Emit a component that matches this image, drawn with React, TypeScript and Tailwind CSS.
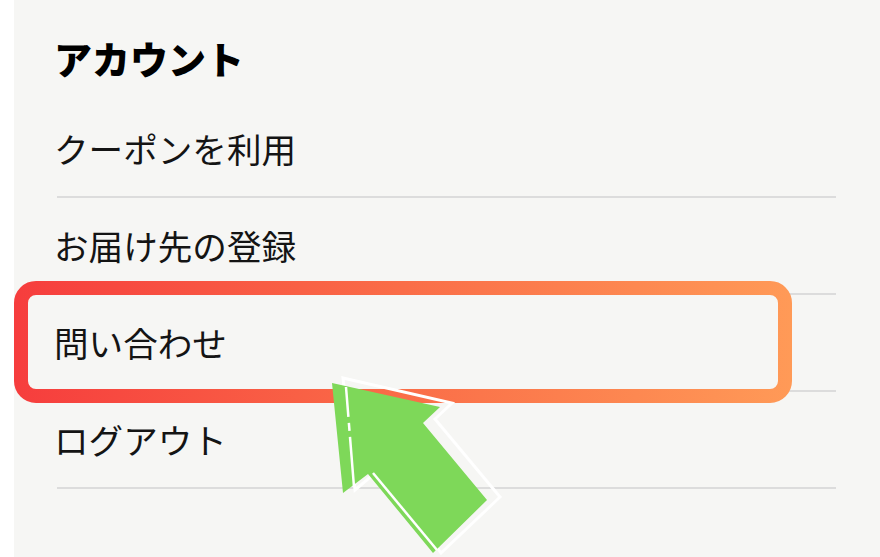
import React from "react";

const items = ["クーポンを利用", "お届け先の登録", "問い合わせ", "ログアウト"];

export default function App() {
  return (
    <div
      className="relative w-[880px] h-[557px] overflow-hidden bg-white flex"
      style={{ fontFamily: '"Noto Sans CJK JP", "Noto Sans", sans-serif' }}
    >
      <div className="ml-[14px] flex-1 bg-[#f6f6f4] pl-[43px] pr-[44px]">
        <div className="h-[101px] pt-[14px] flex items-center">
          <h2 className="-ml-[3px] text-[38px] font-black text-black leading-none">アカウント</h2>
        </div>
        {items.map((t) => (
          <div
            key={t}
            className="h-[97px] flex items-center border-b-2 border-[#dcdcdc] text-[34.6px] leading-none text-[#141414]"
          >
            <span className="-ml-[3px]">{t}</span>
          </div>
        ))}
      </div>
      <svg
        className="absolute left-0 top-0 pointer-events-none"
        width={880}
        height={557}
        viewBox="0 0 880 557"
      >
        <defs>
          <linearGradient id="hl" x1="14" y1="0" x2="792" y2="0" gradientUnits="userSpaceOnUse">
            <stop offset="0" stopColor="#f63d3d" />
            <stop offset="0.5" stopColor="#fa6d48" />
            <stop offset="1" stopColor="#ff9a57" />
          </linearGradient>
        </defs>
        <rect x={21} y={288} width={764} height={108} rx={15} fill="none" stroke="url(#hl)" strokeWidth={14} />
        <polygon
          points="343,378 452,403 435,419 500,497 441,553 381,468 355,490"
          fill="none"
          stroke="#ffffff"
          strokeWidth={3}
          strokeLinejoin="miter"
        />
        <polygon
          points="332,383 440,407 423,423 487,500 433,553 368,474 343,493"
          fill="#7ed859"
        />
        <line x1={346} y1={387} x2={354} y2={487} stroke="#ffffff" strokeWidth={2.5} strokeDasharray="30 6 8 6 60" />
        <line x1={373} y1={473} x2={437} y2={550} stroke="#ffffff" strokeWidth={2.5} />
      </svg>
    </div>
  );
}
